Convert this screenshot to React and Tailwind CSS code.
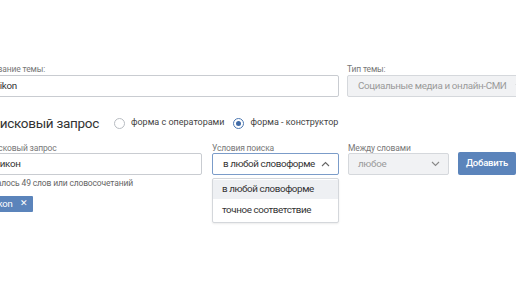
import React from "react";

function Chevron({ up = false, className = "" }) {
  return (
    <svg width="9" height="6" viewBox="0 0 9 6" className={className} fill="none">
      {up ? (
        <path d="M1 5 L4.5 1.5 L8 5" stroke="#666" strokeWidth="1.1" />
      ) : (
        <path d="M1 1 L4.5 4.5 L8 1" stroke="#888" strokeWidth="1.1" />
      )}
    </svg>
  );
}

export default function App() {
  return (
    <div className="w-[516px] h-[289px] overflow-hidden bg-white text-[#333] font-['Roboto',sans-serif]">
      <div className="-ml-[17px] pt-[64px] w-[560px]">
        {/* Row 1 */}
        <div className="flex gap-[8px]">
          <div className="w-[356px] flex flex-col">
            <div className="h-[11px] text-[8.5px] leading-[11px] tracking-[-0.15px] text-[#777]">Название темы:</div>
            <div className="h-[22px] border border-[#c9ccd1] rounded-[2px] flex items-center px-[9px] text-[9.8px] tracking-[-0.3px]">
              Nikon
            </div>
          </div>
          <div className="w-[190px] flex flex-col">
            <div className="h-[11px] text-[8.5px] leading-[11px] tracking-[-0.15px] text-[#777]">Тип темы:</div>
            <div className="h-[22px] border border-[#d5d8dc] bg-[#f1f2f4] rounded-[2px] flex items-center pl-[10px] text-[9.8px] tracking-[-0.35px] text-[#9a9a9a] whitespace-nowrap">
              <span>Социальные медиа и онлайн-СМИ</span>
              <Chevron className="ml-[8px]" />
            </div>
          </div>
        </div>

        {/* Row 2 heading */}
        <div className="mt-[16px] flex items-center h-[20px] whitespace-nowrap">
          <span className="text-[13.5px] leading-[20px] tracking-[-0.3px] text-[#333]">Поисковый запрос</span>
          <span className="ml-[15px] w-[11px] h-[11px] rounded-full border border-[#b8bcc2] bg-white"></span>
          <span className="ml-[6px] text-[9px] text-[#444]">форма с операторами</span>
          <span className="ml-[9px] w-[11px] h-[11px] rounded-full border border-[#4a76b0] bg-white flex items-center justify-center">
            <span className="w-[5px] h-[5px] rounded-full bg-[#3f6aa6]"></span>
          </span>
          <span className="ml-[6px] text-[9px] text-[#444]">форма - конструктор</span>
        </div>

        {/* Row 3 */}
        <div className="mt-[10px] flex items-start whitespace-nowrap">
          <div className="w-[219px] flex flex-col">
            <div className="h-[10px] text-[8.5px] leading-[10px] tracking-[-0.15px] text-[#777]">Поисковый запрос</div>
            <div className="h-[22px] border border-[#c9ccd1] rounded-[2px] flex items-center px-[9px] text-[9.8px] tracking-[-0.3px]">
              Никон
            </div>
            <div className="mt-[2px] h-[12px] text-[8.5px] leading-[12px] tracking-[-0.15px] text-[#666]">Осталось 49 слов или словосочетаний</div>
            <div className="mt-[7px] flex">
              <span className="h-[16px] bg-[#5b84bb] text-white text-[9.5px] tracking-[-0.2px] flex items-center pl-[6px] pr-[6px] rounded-[1px]">
                Nikon<span className="ml-[7px] text-[9px]">✕</span>
              </span>
            </div>
          </div>
          <div className="ml-[10px] w-[127px] flex flex-col relative">
            <div className="h-[10px] text-[8.5px] leading-[10px] tracking-[-0.15px] text-[#777]">Условия поиска</div>
            <div className="h-[22px] border border-[#7b9cc9] rounded-[2px] flex items-center justify-between pl-[10px] pr-[8px] text-[9.8px] tracking-[-0.4px]">
              <span>в любой словоформе</span>
              <Chevron up />
            </div>
            <div className="absolute left-0 top-[35px] w-[127px] border border-[#d4d7db] bg-white rounded-[2px] shadow-[0_1px_2px_rgba(0,0,0,0.08)] text-[9.8px] tracking-[-0.4px] py-[1px]">
              <div className="h-[19px] bg-[#eef0f3] flex items-center px-[9px]">в любой словоформе</div>
              <div className="h-[22px] flex items-center px-[9px]">точное соответствие</div>
            </div>
          </div>
          <div className="ml-[9px] w-[101px] flex flex-col">
            <div className="h-[10px] text-[8.5px] leading-[10px] tracking-[-0.15px] text-[#777]">Между словами</div>
            <div className="h-[22px] border border-[#d5d8dc] bg-[#f1f2f4] rounded-[2px] flex items-center justify-between pl-[9px] pr-[8px] text-[9.8px] tracking-[-0.3px] text-[#9a9a9a]">
              <span>любое</span>
              <Chevron />
            </div>
          </div>
          <div className="ml-[9px] mt-[9px] w-[58px] h-[23px] bg-[#5b84bb] rounded-[2px] flex items-center justify-center text-white text-[9.5px] font-medium tracking-[-0.2px]">
            Добавить
          </div>
        </div>
      </div>
    </div>
  );
}
